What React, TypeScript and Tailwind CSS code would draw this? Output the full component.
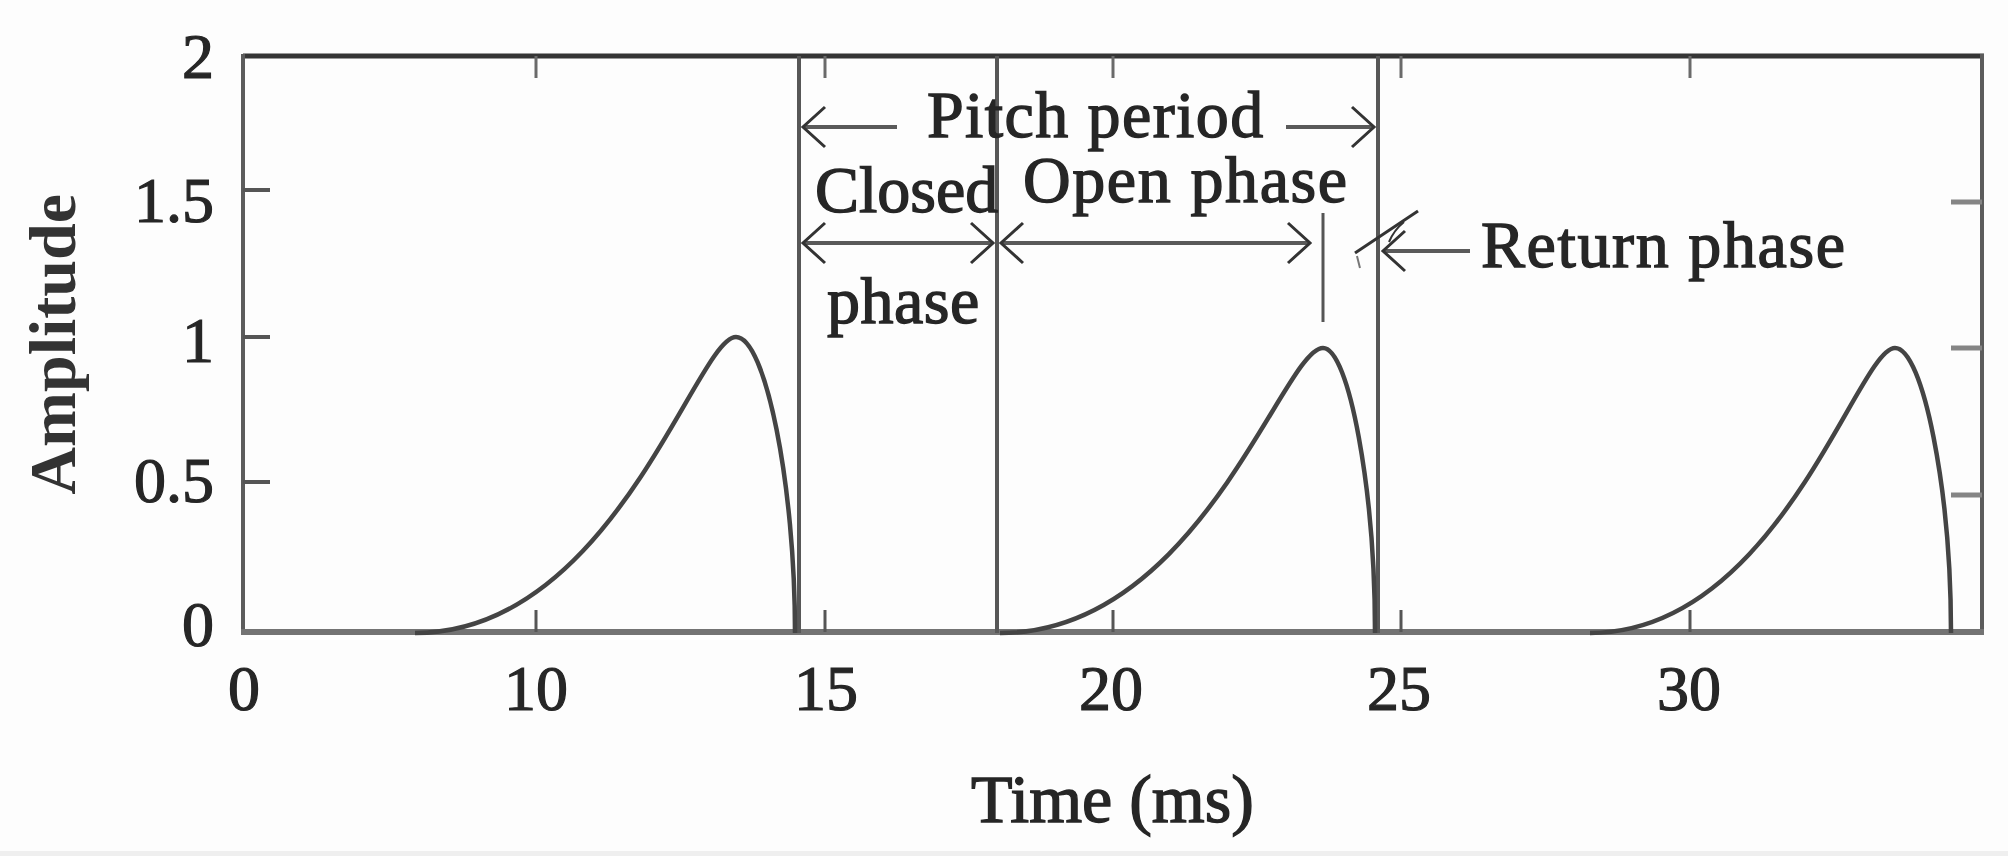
import React from "react";

// Glottal pulse figure: pitch period, closed / open / return phase
const Y0 = 633;
const UNIT = 296;

const pulses = [
  { x0: 415, xp: 736, xe: 795, amp: 1.0 },
  { x0: 1000, xp: 1323, xe: 1375, amp: 0.963 },
  { x0: 1590, xp: 1895, xe: 1951, amp: 0.963 },
];

const xTicks = [536, 825, 1113, 1401, 1690];

const yLabels = [
  { label: "2", y: 78 },
  { label: "1.5", y: 222 },
  { label: "1", y: 362 },
  { label: "0.5", y: 502 },
  { label: "0", y: 646 },
];

const xLabels = [
  { label: "0", x: 244 },
  { label: "10", x: 536 },
  { label: "15", x: 826 },
  { label: "20", x: 1111 },
  { label: "25", x: 1399 },
  { label: "30", x: 1689 },
];

function pulsePath(p: { x0: number; xp: number; xe: number; amp: number }) {
  const W = p.xp - p.x0;
  const F = p.xe - p.xp;
  const A = p.amp * UNIT;
  const yp = Y0 - A;
  return `M ${p.x0} ${Y0} C ${p.x0 + 0.619 * W} ${Y0} ${p.x0 + 0.877 * W} ${yp} ${p.xp} ${yp} C ${p.xp + 0.5 * F} ${yp} ${p.xe} ${Y0 - 0.5 * A} ${p.xe} ${Y0}`;
}

function Arrow({ x1, x2, y, left, right }: { x1: number; x2: number; y: number; left?: boolean; right?: boolean }) {
  return (
    <g>
      <line x1={x1} y1={y} x2={x2} y2={y} stroke="#5a5a5a" strokeWidth={4} />
      {left && (
        <path d={`M ${x1 + 22} ${y - 20} L ${x1} ${y} L ${x1 + 22} ${y + 20}`} fill="none" stroke="#333" strokeWidth={3} />
      )}
      {right && (
        <path d={`M ${x2 - 22} ${y - 20} L ${x2} ${y} L ${x2 - 22} ${y + 20}`} fill="none" stroke="#333" strokeWidth={3} />
      )}
    </g>
  );
}

function Note({ x, y, children, spacing = 1.6 }: { x: number; y: number; children: React.ReactNode; spacing?: number }) {
  return (
    <text x={x} y={y} fontSize={66} letterSpacing={spacing} fill="#262626" stroke="#262626" strokeWidth={1.4}>
      {children}
    </text>
  );
}

export default function App() {
  return (
    <div className="w-[2008px] h-[856px] bg-[#fdfdfd] flex flex-col font-['Liberation_Serif',serif] text-[#262626]">
      <div className="h-[851px] flex items-start">
        {/* y axis title */}
        <div className="w-[120px] h-[689px] flex items-center pl-[20px]">
          <span className="[writing-mode:vertical-rl] [text-orientation:sideways] rotate-180 text-[66px] leading-none font-bold text-[#333]">
            Amplitude
          </span>
        </div>

        <div className="flex flex-col">
          <svg width={1888} height={740} viewBox="120 0 1888 740" className="block">
            {/* frame */}
            <line x1={243} y1={56} x2={1984} y2={56} stroke="#353535" strokeWidth={5} />
            <line x1={243} y1={54} x2={243} y2={635} stroke="#5c5c5c" strokeWidth={4} />
            <line x1={1982} y1={54} x2={1982} y2={635} stroke="#5c5c5c" strokeWidth={4} />
            <line x1={241} y1={632} x2={1984} y2={632} stroke="#737373" strokeWidth={6} />

            {/* x ticks */}
            {xTicks.map((x) => (
              <g key={x}>
                <line x1={x} y1={56} x2={x} y2={78} stroke="#6a6a6a" strokeWidth={3} />
                <line x1={x} y1={632} x2={x} y2={610} stroke="#555" strokeWidth={3} />
              </g>
            ))}

            {/* y ticks */}
            {[190, 337, 482].map((y) => (
              <line key={y} x1={243} y1={y} x2={270} y2={y} stroke="#555" strokeWidth={4} />
            ))}
            {[202, 348, 495].map((y) => (
              <line key={y} x1={1982} y1={y} x2={1951} y2={y} stroke="#858585" strokeWidth={5} />
            ))}

            {/* tick labels */}
            {yLabels.map((l) => (
              <text key={l.label} x={214} y={l.y} fontSize={64} textAnchor="end" fill="#262626" stroke="#262626" strokeWidth={1.2}>
                {l.label}
              </text>
            ))}
            {xLabels.map((l) => (
              <text key={l.label} x={l.x} y={710} fontSize={64} textAnchor="middle" fill="#262626" stroke="#262626" strokeWidth={1.2}>
                {l.label}
              </text>
            ))}

            {/* phase boundaries */}
            {[799, 997, 1378].map((x) => (
              <line key={x} x1={x} y1={56} x2={x} y2={633} stroke="#575757" strokeWidth={4} />
            ))}

            {/* pulses */}
            {pulses.map((p, i) => (
              <path key={i} d={pulsePath(p)} fill="none" stroke="#444" strokeWidth={4.5} />
            ))}

            {/* pitch period */}
            <Arrow x1={803} x2={897} y={127} left />
            <Arrow x1={1286} x2={1374} y={127} right />
            <Note x={927} y={137} spacing={1.4}>Pitch period</Note>

            {/* closed / open phase */}
            <Note x={815} y={212} spacing={0}>Closed</Note>
            <Note x={1023} y={202}>Open phase</Note>
            <Arrow x1={803} x2={993} y={243} left right />
            <Arrow x1={1001} x2={1310} y={243} left right />
            <Note x={827} y={323} spacing={0.5}>phase</Note>
            <line x1={1323} y1={213} x2={1323} y2={322} stroke="#555" strokeWidth={3} />

            {/* return phase */}
            <Arrow x1={1383} x2={1470} y={251} left />
            <path d="M 1355 253 L 1418 211" fill="none" stroke="#333" strokeWidth={3} />
            <path d="M 1404 222 Q 1394 230 1389 242" fill="none" stroke="#333" strokeWidth={2} />
            <path d="M 1357 256 L 1360 268" fill="none" stroke="#777" strokeWidth={2} />
            <Note x={1481} y={267}>Return phase</Note>
          </svg>

          {/* x axis title */}
          <div className="ml-[123px] w-[1739px] mt-[25px] text-center text-[68px] leading-none [-webkit-text-stroke:1.4px_#262626]">
            Time (ms)
          </div>
        </div>
      </div>
      <div className="h-[5px] bg-[#efefef]" />
    </div>
  );
}
